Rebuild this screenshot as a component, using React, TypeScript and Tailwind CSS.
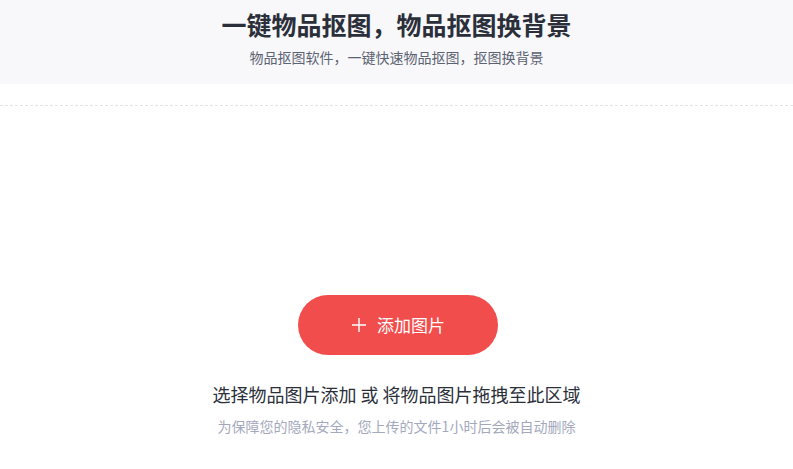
export default function App() {
  return (
    <div className="min-h-[469px] bg-white" style={{ fontFamily: '"Noto Sans CJK SC", "Noto Sans", sans-serif' }}>
      {/* Header */}
      <div className="flex h-[84px] flex-col items-center bg-[#f8f8fa] pt-[6px]">
        <h1 className="text-[25px] font-bold leading-[36px] text-[#2b2f3a]">一键物品抠图，物品抠图换背景</h1>
        <p className="mt-[5px] text-[14px] leading-[20px] text-[#5b6372]">物品抠图软件，一键快速物品抠图，抠图换背景</p>
      </div>

      <div className="mt-[21px] border-t border-dashed border-[#e2e4e8]" />

      {/* Upload zone */}
      <div className="flex flex-col items-center pt-[189px]">
        <button className="ml-[3px] flex h-[60px] w-[200px] items-center justify-center gap-[10px] rounded-full bg-[#f24d4d] text-[17px] text-white">
          <svg width="16" height="16" viewBox="0 0 16 16" fill="none" stroke="currentColor" strokeWidth="1.4">
            <path d="M8 1v14M1 8h14" />
          </svg>
          添加图片
        </button>
        <p className="mt-[26px] text-[18px] leading-[26px] text-[#2b2f3a]">选择物品图片添加 或 将物品图片拖拽至此区域</p>
        <p className="mt-[9px] text-[14px] leading-[20px] text-[#a3a8bd]">为保障您的隐私安全，您上传的文件1小时后会被自动删除</p>
      </div>
    </div>
  );
}
